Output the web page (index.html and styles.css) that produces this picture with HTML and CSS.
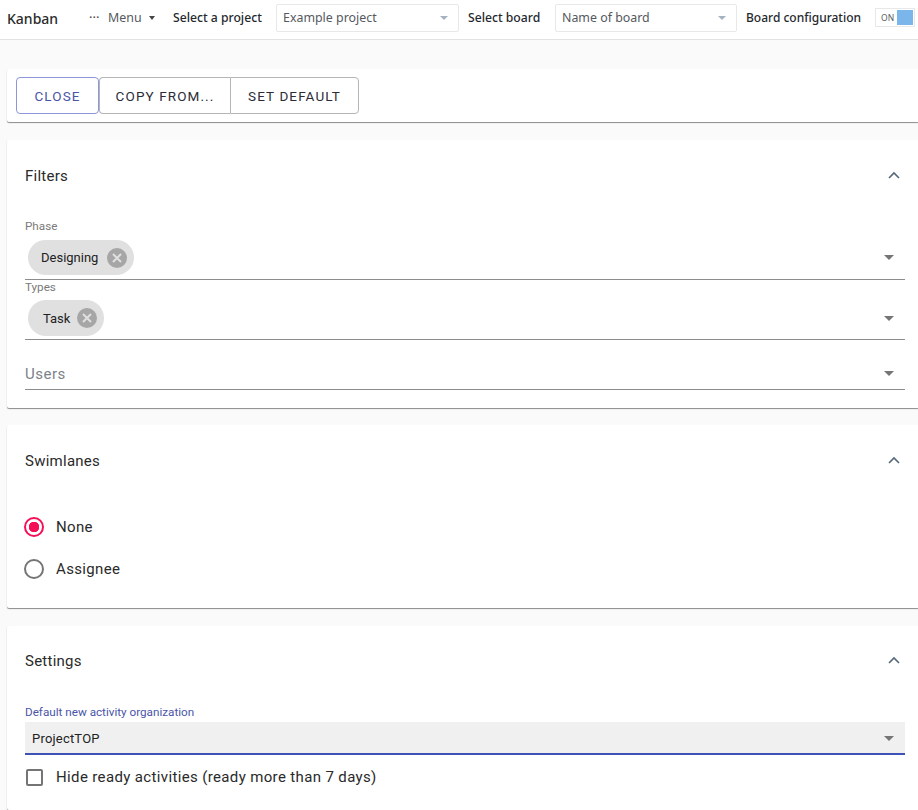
FILE: index.html
```html
<!DOCTYPE html>
<html lang="en">
<head>
<meta charset="utf-8">
<title>Kanban</title>
<link rel="stylesheet" href="styles.css">
</head>
<body>
<header class="topbar">
  <span class="brand">Kanban</span>
  <span class="menu"><span class="dots">···</span><span>Menu</span><span class="caret-dark"></span></span>
  <span class="bar-label project-label">Select a project</span>
  <span class="bar-select project-select"><span>Example project</span><span class="caret-light"></span></span>
  <span class="bar-label board-label">Select board</span>
  <span class="bar-select board-select"><span>Name of board</span><span class="caret-light"></span></span>
  <span class="bar-label config-label">Board configuration</span>
  <span class="toggle"><span class="toggle-text">ON</span><span class="toggle-knob"></span></span>
</header>

<main class="content">
  <section class="card actions">
    <button class="btn btn-primary">CLOSE</button><button class="btn btn-mid">COPY FROM...</button><button class="btn btn-last">SET DEFAULT</button>
  </section>

  <section class="card filters">
    <div class="card-head">
      <h2>Filters</h2>
      <svg class="chev" width="12" height="8" viewBox="0 0 12 8"><path d="M1 7l5-5 5 5" fill="none" stroke="#55677a" stroke-width="1.6"/></svg>
    </div>
    <div class="field field-phase">
      <label class="mini-label">Phase</label>
      <div class="chip-row">
        <span class="chip chip-phase">Designing<svg class="chip-x" width="20" height="20" viewBox="0 0 20 20"><circle cx="10" cy="10" r="10" fill="#a6a6a6"/><path d="M6 6l8 8M14 6l-8 8" stroke="#e0e0e0" stroke-width="2"/></svg></span>
        <span class="caret"></span>
      </div>
    </div>
    <div class="field field-types">
      <label class="mini-label">Types</label>
      <div class="chip-row">
        <span class="chip chip-task">Task<svg class="chip-x" width="20" height="20" viewBox="0 0 20 20"><circle cx="10" cy="10" r="10" fill="#a6a6a6"/><path d="M6 6l8 8M14 6l-8 8" stroke="#e0e0e0" stroke-width="2"/></svg></span>
        <span class="caret"></span>
      </div>
    </div>
    <div class="field field-users">
      <span class="placeholder">Users</span>
      <span class="caret"></span>
    </div>
  </section>

  <section class="card swimlanes">
    <div class="card-head">
      <h2>Swimlanes</h2>
      <svg class="chev" width="12" height="8" viewBox="0 0 12 8"><path d="M1 7l5-5 5 5" fill="none" stroke="#55677a" stroke-width="1.6"/></svg>
    </div>
    <div class="radio-row radio-first"><span class="radio radio-on"></span><span>None</span></div>
    <div class="radio-row"><span class="radio"></span><span>Assignee</span></div>
  </section>

  <section class="card settings">
    <div class="card-head">
      <h2>Settings</h2>
      <svg class="chev" width="12" height="8" viewBox="0 0 12 8"><path d="M1 7l5-5 5 5" fill="none" stroke="#55677a" stroke-width="1.6"/></svg>
    </div>
    <label class="mini-label mini-focus">Default new activity organization</label>
    <div class="org-select"><span>ProjectTOP</span><span class="caret"></span></div>
    <div class="check-row"><span class="checkbox"></span><span>Hide ready activities (ready more than 7 days)</span></div>
  </section>
</main>
</body>
</html>
```
FILE: styles.css
```css
* { box-sizing: border-box; }
html, body { margin: 0; padding: 0; }
body {
  width: 918px;
  height: 810px;
  overflow: hidden;
  background: #fafafa;
  font-family: Roboto, "Liberation Sans", sans-serif;
  color: #212121;
}
.topbar {
  height: 40px;
  background: #fff;
  border-bottom: 1px solid #e2e2e2;
  display: flex;
  align-items: center;
  font-family: "Noto Sans", "Open Sans", sans-serif;
  padding-left: 7px;
  padding-bottom: 4px;
}
.topbar > * { flex: none; }
.brand { font-size: 14px; font-weight: 500; width: 82px; color: #2b2b2b; padding-top: 1px; }
.menu { display: flex; align-items: center; font-size: 12.4px; color: #55595e; width: 84px; }
.dots { width: 19px; font-size: 13px; color: #444; position: relative; top: -1px; }
.caret-dark { width: 0; height: 0; border: 3.5px solid transparent; border-top: 4px solid #444; border-bottom: 0; margin-left: 7px; }
.bar-label { font-size: 12.2px; font-weight: 500; color: #25292e; white-space: nowrap; }
.project-label { width: 103px; }
.board-label { width: 87px; }
.config-label { width: 125px; margin-left: 9px; font-size: 12px; }
.bar-select {
  height: 28px;
  background: #fff;
  border: 1px solid #e8e8e8;
  border-radius: 2px;
  font-size: 12.4px;
  color: #55595e;
  display: flex;
  align-items: center;
  justify-content: space-between;
  padding: 0 10px 0 6px;
}
.project-select { width: 183px; margin-right: 9px; }
.board-select { width: 182px; }
.caret-light { width: 0; height: 0; border: 4px solid transparent; border-top: 4px solid #a4b2c2; border-bottom: 0; margin-top: 1px; }
.toggle {
  width: 40px;
  height: 19px;
  border: 1px solid #e8e8e8;
  background: #fff;
  display: flex;
  align-items: center;
  justify-content: space-between;
  padding: 0 1px 0 5px;
  margin-left: 4px;
}
.toggle-text { font-size: 8.5px; color: #55595e; }
.toggle-knob { width: 16px; height: 15px; background: #7ab6ea; }

.content { padding: 29px 0 0 7px; display: flex; flex-direction: column; }
.card {
  background: #fff;
  border-radius: 2px 0 0 2px;
  box-shadow: 0 1px 1px rgba(0,0,0,.45);
  width: 911px;
}
.actions { height: 53px; padding: 8px 9px; display: flex; align-items: flex-start; margin-bottom: 18px; }
.btn {
  height: 37px;
  background: #fff;
  border: 1px solid #b5b5b5;
  font: 400 13.5px Roboto, sans-serif;
  letter-spacing: 1.1px;
  color: #2c2c38;
  padding: 0;
}
.btn-primary { width: 83px; color: #4a55a8; border-color: #8c96d8; border-radius: 4px; }
.btn-mid { width: 131px; border-radius: 4px 0 0 4px; border-right: 0; }
.btn-last { width: 129px; border-radius: 0 4px 4px 0; }

.card-head { display: flex; justify-content: space-between; align-items: center; height: 20px; padding-right: 5px; }
.chev { position: relative; top: -1.5px; }
.card-head h2 { margin: 0; font-size: 15px; font-weight: 400; letter-spacing: 0.25px; color: #2a2a2a; }
.filters { height: 268px; padding: 26px 13px 0 18px; margin-bottom: 17px; }
.mini-label { display: block; font-size: 11.7px; line-height: 14px; color: #7a7a7a; }
.mini-focus { color: #4a55a8; margin-top: 34px; }
.field { position: relative; }
.field-phase { margin-top: 33px; height: 61px; border-bottom: 1px solid #8c8c8c; }
.field-types { height: 60px; border-bottom: 1px solid #8c8c8c; }
.field-users { height: 50px; border-bottom: 1px solid #8c8c8c; display: flex; align-items: center; justify-content: space-between; padding: 18px 11px 0 0; }
.placeholder { font-size: 15px; letter-spacing: 0.5px; color: #7b8288; }
.chip-row { display: flex; align-items: center; justify-content: space-between; padding: 0 11px 0 3px; margin-top: 7px; height: 35px; }
.field-types .chip-row { margin-top: 6px; height: 36px; }
.chip {
  display: inline-flex;
  align-items: center;
  background: #e0e0e0;
  border-radius: 18px;
  font-size: 13px;
  color: #222;
  height: 100%;
}
.chip-phase { padding: 0 7px 0 13px; width: 106px; justify-content: space-between; }
.chip-task { padding: 0 7px 0 15px; width: 76px; justify-content: space-between; }
.caret { width: 0; height: 0; border: 5px solid transparent; border-top: 5px solid #757575; border-bottom: 0; }

.swimlanes { height: 183px; padding: 26px 13px 0 18px; margin-bottom: 18px; }
.radio-row { display: flex; align-items: center; gap: 12px; height: 42px; font-size: 15px; letter-spacing: 0.35px; color: #2a2a2a; margin-left: -1px; }
.radio-first { margin-top: 35px; }
.radio { width: 20px; height: 20px; border: 2px solid #757575; border-radius: 50%; flex: none; background: #fff; }
.radio-on { border-color: #f50f57; background: radial-gradient(circle, #f50f57 0 5px, #fff 5.5px); }

.settings { height: 184px; padding: 25px 13px 0 18px; }
.org-select {
  height: 33px;
  background: #f0f0f0;
  border-bottom: 2px solid #3f51b5;
  display: flex;
  align-items: center;
  justify-content: space-between;
  padding: 1px 11px 0 7px;
  font-size: 13px;
  letter-spacing: 0.2px;
  margin-top: 3px;
  color: #222;
}
.check-row { display: flex; align-items: center; gap: 13px; font-size: 15px; letter-spacing: 0.36px; color: #2a2a2a; margin-top: 12px; height: 20px; }
.checkbox { width: 17px; height: 17px; border: 2px solid #757575; border-radius: 2px; margin-left: 1px; flex: none; }
```
